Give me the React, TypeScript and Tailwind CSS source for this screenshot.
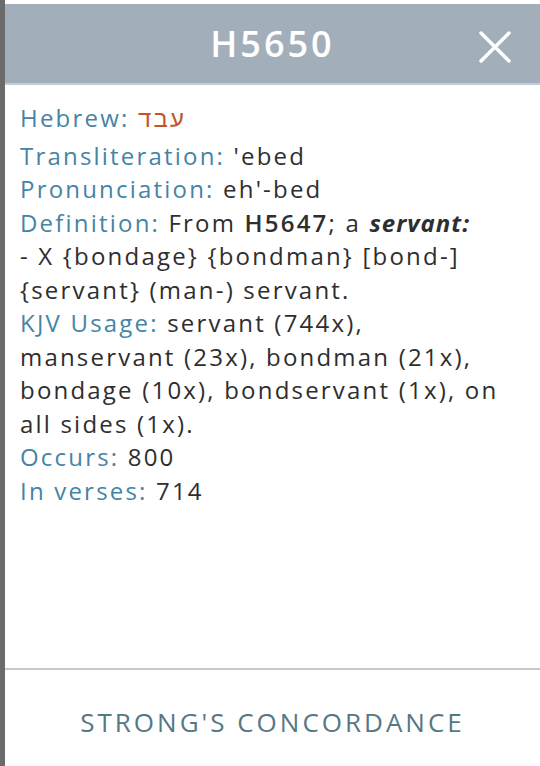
const Label = ({ children }: { children: React.ReactNode }) => (
  <span className="text-[#4684a5]">{children}</span>
);

const App = () => {
  return (
    <div className="flex h-[766px] w-[540px] overflow-hidden bg-[#6b6b6b] font-['Open_Sans',sans-serif]">
      <div className="w-[5px] shrink-0 bg-[#6b6b6b]" />
      <div className="flex flex-1 flex-col bg-white">
        <header className="mt-[4px] flex h-[81px] items-center justify-center border-b-2 border-[#c3ccd2] bg-[#a2afba] relative">
          <h1 className="text-[36px] font-semibold tracking-[3px] text-white">H5650</h1>
          <button className="absolute right-[24px] top-[22px] p-1">
            <svg width="34" height="34" viewBox="0 0 34 34" fill="none" stroke="white" strokeWidth="3.5" strokeLinecap="round">
              <path d="M3 3L31 31M31 3L3 31" />
            </svg>
          </button>
        </header>

        <main className="flex-1 px-[15px] pt-[16px] text-[24px] leading-[33.5px] tracking-[2.2px] text-[#2e2e2e]">
          <div className="mb-[4px]">
            <Label>Hebrew:</Label>{' '}
            <span className="text-[#c4542c] font-['Noto_Sans',sans-serif]">עבד</span>
          </div>
          <div><Label>Transliteration:</Label> 'ebed</div>
          <div><Label>Pronunciation:</Label> eh'-bed</div>
          <div>
            <Label>Definition:</Label> From <span className="font-semibold">H5647</span>; a{' '}
            <span className="font-bold italic tracking-[1px]">servant:</span>
          </div>
          <div>- X {'{bondage}'} {'{bondman}'} [bond-]</div>
          <div>{'{servant}'} (man-) servant.</div>
          <div><Label>KJV Usage:</Label> servant (744x),</div>
          <div>manservant (23x), bondman (21x),</div>
          <div className="whitespace-nowrap">bondage (10x), bondservant (1x), on</div>
          <div>all sides (1x).</div>
          <div><Label>Occurs:</Label> 800</div>
          <div><Label>In verses:</Label> 714</div>
        </main>

        <footer className="flex h-[98px] items-center justify-center border-t-2 border-[#c8c8c8] pt-[9px]">
          <span className="text-[26px] tracking-[3px] text-[#557886]">STRONG'S CONCORDANCE</span>
        </footer>
      </div>
    </div>
  );
};

export default App;
